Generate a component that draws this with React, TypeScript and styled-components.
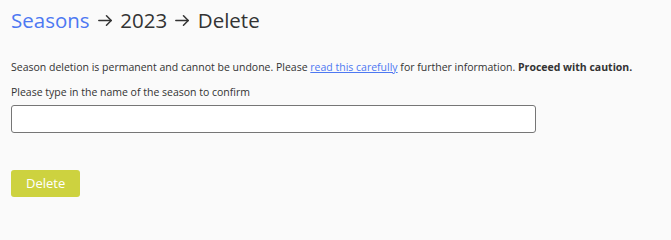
import React from "react";
import styled, { createGlobalStyle } from "styled-components";

const Global = createGlobalStyle`
  html, body { margin: 0; padding: 0; background: #fafafa; }
  body { font-family: "Open Sans", "Liberation Sans", sans-serif; color: #333; }
`;

const Page = styled.div`
  padding: 5px 11px 0 11px;
  display: flex;
  flex-direction: column;
`;

const Title = styled.h1`
  margin: 0;
  font-size: 20.5px;
  font-weight: 400;
  line-height: 30px;
  height: 30px;
  color: #333;
`;

const Crumb = styled.a`
  color: #4d78f2;
  text-decoration: none;
`;

const ArrowIcon = styled.svg`
  display: inline-block;
  width: 14px;
  height: 11px;
  vertical-align: 2px;
  margin: 0 3px;
`;

const Arrow = () => (
  <ArrowIcon viewBox="0 0 14 11" fill="none" stroke="#333" strokeWidth="1.5" strokeLinecap="round" strokeLinejoin="round">
    <path d="M0.8 5.5H13.2" />
    <path d="M8.5 0.8L13.2 5.5L8.5 10.2" />
  </ArrowIcon>
);

const Notice = styled.p`
  margin: 25px 0 0 0;
  font-size: 10.5px;
  line-height: 14px;
`;

const Link = styled.a`
  color: #4d78f2;
  text-decoration: underline;
`;

const Label = styled.label`
  display: block;
  margin-top: 11px;
  font-size: 10.5px;
  line-height: 14px;
`;

const Input = styled.input`
  display: block;
  box-sizing: border-box;
  margin-top: 6px;
  width: 525px;
  height: 28px;
  border: 1px solid #767676;
  border-radius: 3px;
  background: #fff;
  padding: 0 6px;
  font-family: inherit;
  font-size: 12px;
  outline: none;
`;

const Button = styled.button`
  align-self: flex-start;
  margin-top: 37px;
  height: 27px;
  padding: 0 15px;
  border: none;
  border-radius: 3px;
  background: #cdd23f;
  color: #fff;
  font-family: "Open Sans", "Liberation Sans", sans-serif;
  font-size: 13px;
  line-height: 27px;
  cursor: pointer;
`;

export default function App() {
  return (
    <>
      <Global />
      <Page>
        <Title>
          <Crumb href="#">Seasons</Crumb> <Arrow /> 2023 <Arrow /> Delete
        </Title>
        <Notice>
          Season deletion is permanent and cannot be undone. Please{" "}
          <Link href="#">read this carefully</Link> for further information.{" "}
          <strong>Proceed with caution.</strong>
        </Notice>
        <Label htmlFor="season-name">Please type in the name of the season to confirm</Label>
        <Input id="season-name" type="text" />
        <Button>Delete</Button>
      </Page>
    </>
  );
}
